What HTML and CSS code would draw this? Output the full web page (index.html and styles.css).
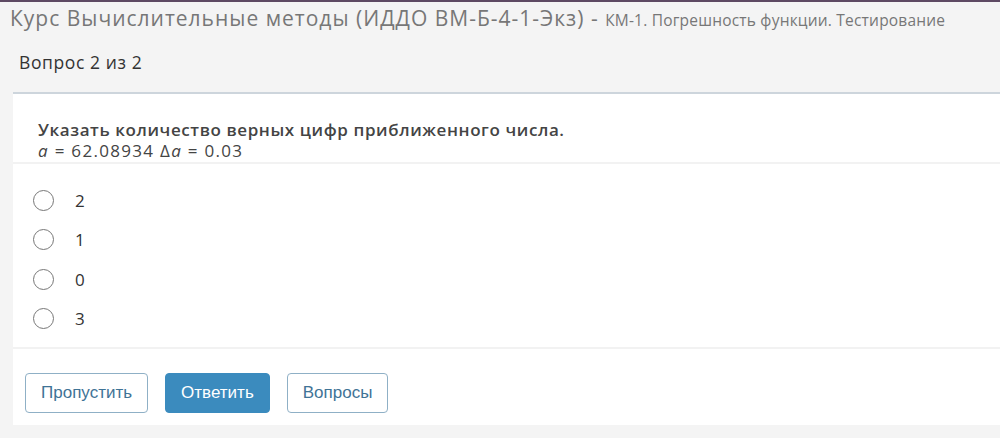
FILE: index.html
```html
<!DOCTYPE html>
<html lang="ru">
<head>
    <meta charset="UTF-8">
    <meta name="viewport" content="width=device-width, initial-scale=1.0">
    <title>Тестирование</title>
    <link rel="stylesheet" href="styles.css">
</head>
<body>

<div class="page">
    <h1 class="course-title">
        Курс Вычислительные методы (ИДДО ВМ-Б-4-1-Экз) -
        <span class="test-name">КМ-1. Погрешность функции. Тестирование</span>
    </h1>

    <div class="question-counter">Вопрос 2 из 2</div>

    <div class="question-card">
        <div class="question-text">
            Указать количество верных цифр приближенного числа.<br>
            <span class="formula"><i>a</i> = 62.08934 &Delta;<i>a</i> = 0.03</span>
        </div>

        <form id="answerForm" class="answers">
            <label class="answer"><input type="radio" name="answer" value="2"><span class="radio"></span>2</label>
            <label class="answer"><input type="radio" name="answer" value="1"><span class="radio"></span>1</label>
            <label class="answer"><input type="radio" name="answer" value="0"><span class="radio"></span>0</label>
            <label class="answer"><input type="radio" name="answer" value="3"><span class="radio"></span>3</label>
        </form>

        <div class="action-buttons">
            <button type="button" class="btn btn-outline">Пропустить</button>
            <button type="button" class="btn btn-primary">Ответить</button>
            <button type="button" class="btn btn-outline">Вопросы</button>
        </div>
    </div>
</div>

</body>
</html>
```

FILE: styles.css
```css
body {
    margin: 0;
    background-color: #f4f4f4;
    font-family: 'Open Sans', 'Noto Sans', sans-serif;
    color: #333;
    border-top: 2px solid #5e4a63;
}

.page {
    padding: 0 0 0 13px;
}

.course-title {
    margin: 0 0 0 -3px;
    padding-top: 2px;
    font-size: 21px;
    font-weight: normal;
    letter-spacing: 1px;
    color: #777;
    line-height: 28px;
    white-space: nowrap;
}

.test-name {
    font-size: 15.5px;
    letter-spacing: 0.2px;
}

.question-counter {
    padding: 16px 0 0 6px;
    font-size: 17.5px;
    letter-spacing: 0.6px;
    line-height: 24px;
    color: #333;
    height: 42px;
}

.question-card {
    background: #fff;
    border-top: 2px solid #cdd5dc;
}

.question-text {
    padding: 25px 0 1px 25px;
    font-size: 17px;
    font-weight: 600;
    letter-spacing: 0.6px;
    line-height: 21px;
    color: #444;
    border-bottom: 2px solid #f2f2f2;
}

.formula {
    font-weight: normal;
    letter-spacing: 1.3px;
}

.answers {
    padding: 17px 0 9px 20px;
    border-bottom: 2px solid #f2f2f2;
}

.answer {
    display: flex;
    align-items: center;
    height: 39.3px;
    font-size: 17px;
    color: #333;
    cursor: pointer;
}

.answer input {
    display: none;
}

.radio {
    width: 21px;
    height: 21px;
    border: 1px solid #777;
    border-radius: 50%;
    margin-right: 21px;
    box-sizing: border-box;
}

.answer input:checked + .radio {
    border: 6px solid #3b8bbe;
}

.action-buttons {
    display: flex;
    gap: 17px;
    padding: 24px 0 12px 12px;
}

.btn {
    height: 40px;
    padding: 0 15px;
    font-family: 'Liberation Sans', Arial, sans-serif;
    font-size: 17px;
    border-radius: 4px;
    cursor: pointer;
}

.btn-outline {
    background: #fff;
    border: 1px solid #8fb0c6;
    color: #3f7396;
}

.btn-primary {
    background: #3b8bbe;
    border: 1px solid #3b8bbe;
    color: #fff;
}
```
